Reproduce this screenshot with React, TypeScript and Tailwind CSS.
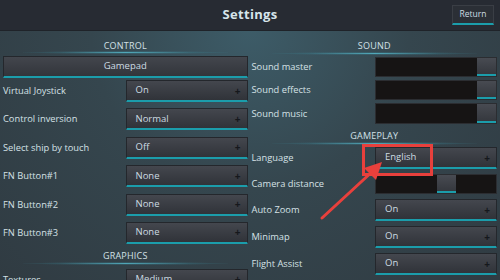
import React from 'react';

const font = { fontFamily: '"Open Sans", "Liberation Sans", sans-serif' };

const SectionTitle = ({ title, className = '' }: { title: string; className?: string }) => (
  <div className={`relative flex flex-col items-center justify-center ${className}`}>
    <span className="text-[9px] tracking-[0.2px] text-[#d3e0e6]">{title}</span>
    <div className="absolute bottom-[2px] left-[20px] right-[20px] h-[3px] bg-[radial-gradient(ellipse_at_center,rgba(90,200,220,0.75)_0%,rgba(60,150,170,0.25)_45%,rgba(0,0,0,0)_75%)]" />
  </div>
);

const Dropdown = ({ value, h = 'h-[22px]' }: { value: string; h?: string }) => (
  <div className={`${h} w-[122px] flex items-center justify-between pl-[9px] pr-[6px] bg-gradient-to-b from-[#44474e] to-[#303339] border border-[#24272c] border-b-2 border-b-[#1b9dab] rounded-[1px]`}>
    <span className="text-[9.5px] text-[#cddbe2]">{value}</span>
    <span className="text-[10px] font-bold leading-none text-[#15181c]">+</span>
  </div>
);

const Slider = ({ knob, h = 'h-[20px]' }: { knob: 'end' | 'mid'; h?: string }) => (
  <div className={`${h} w-[122px] flex bg-[#161414] border border-[#2b2d31]`}>
    {knob === 'end' ? (
      <div className="ml-auto w-[19px] h-full bg-gradient-to-b from-[#484b52] to-[#35383e] border-b-2 border-b-[#1b9dab]" />
    ) : (
      <div className="ml-[61px] w-[19px] h-full bg-gradient-to-b from-[#484b52] to-[#35383e] border-b-2 border-b-[#1b9dab]" />
    )}
  </div>
);

const Row = ({ label, children, className = '' }: { label: string; children: React.ReactNode; className?: string }) => (
  <div className={`flex items-center justify-between ${className}`}>
    <span className="text-[9.3px] text-[#d5e1e6]">{label}</span>
    {children}
  </div>
);

export default function App() {
  const controls = [
    { label: 'Virtual Joystick', value: 'On' },
    { label: 'Control inversion', value: 'Normal' },
    { label: 'Select ship by touch', value: 'Off' },
    { label: 'FN Button#1', value: 'None' },
    { label: 'FN Button#2', value: 'None' },
    { label: 'FN Button#3', value: 'None' },
  ];

  return (
    <div
      style={font}
      className="relative w-[500px] h-[280px] overflow-hidden bg-[radial-gradient(ellipse_at_50%_10%,#3d5c68_0%,#35464e_45%,#303b42_100%)]"
    >
      <div className="h-[31px] grid grid-cols-[1fr_auto_1fr] items-center bg-[#272b33] border-b border-[#1f2329]">
        <div />
        <span className="text-[13px] font-bold text-[#d6e5eb] tracking-[0.3px]">Settings</span>
        <div className="flex justify-end pr-[6px]">
          <div className="h-[20px] w-[42px] flex items-center justify-center bg-[#2b2f36] border border-[#3a3e45] border-b-2 border-b-[#1b9dab] text-[8.5px] text-[#cddbe2]">
            Return
          </div>
        </div>
      </div>

      <div className="flex gap-[4px] pl-[3px] pr-[3px]">
        <div className="w-[245px] flex flex-col">
          <SectionTitle title="CONTROL" className="h-[25px] pt-[4px]" />
          <div className="h-[22px] flex items-center justify-center bg-gradient-to-b from-[#43464d] to-[#32353b] border border-[#24272c] border-b-2 border-b-[#1b9dab]">
            <span className="text-[9.5px] text-[#cddbe2]">Gamepad</span>
          </div>
          <div className="flex flex-col gap-[6.4px] mt-[2px]">
            {controls.map((c) => (
              <Row key={c.label} label={c.label}>
                <Dropdown value={c.value} />
              </Row>
            ))}
          </div>
          <SectionTitle title="GRAPHICS" className="h-[22px] mt-[1px]" />
          <Row label="Textures" className="mt-[2px]">
            <Dropdown value="Medium" />
          </Row>
        </div>

        <div className="w-[246px] flex flex-col">
          <SectionTitle title="SOUND" className="h-[23px] mt-[3px] pt-[1px]" />
          <div className="flex flex-col gap-[3px]">
            <Row label="Sound master"><Slider knob="end" /></Row>
            <Row label="Sound effects"><Slider knob="end" /></Row>
            <Row label="Sound music"><Slider knob="end" h="h-[21px]" /></Row>
          </div>
          <SectionTitle title="GAMEPLAY" className="h-[22px] mt-[1px]" />
          <div className="flex flex-col gap-[5px]">
            <Row label="Language"><Dropdown value="English" /></Row>
            <Row label="Camera distance"><Slider knob="mid" /></Row>
            <Row label="Auto Zoom"><Dropdown value="On" /></Row>
            <Row label="Minimap"><Dropdown value="On" /></Row>
            <Row label="Flight Assist"><Dropdown value="On" /></Row>
          </div>
        </div>
      </div>

      <svg className="absolute inset-0 pointer-events-none" width="500" height="280" viewBox="0 0 500 280">
        <rect x="363.5" y="145.5" width="68" height="29" fill="none" stroke="#e8403c" strokeWidth="3" />
        <line x1="322" y1="218" x2="374" y2="170" stroke="#e8403c" strokeWidth="3" strokeLinecap="round" />
        <polygon points="382,162 364,168 376,180" fill="#e8403c" />
      </svg>
    </div>
  );
}
